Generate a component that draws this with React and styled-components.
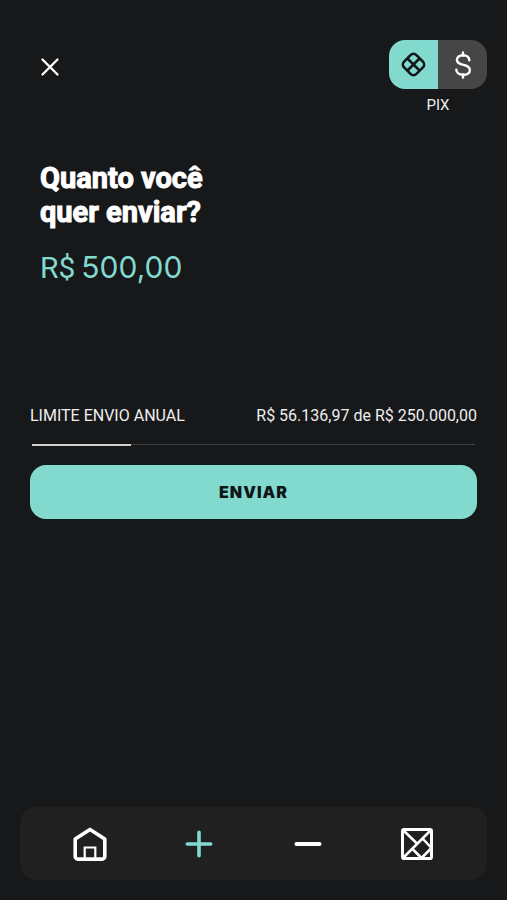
import React, { useState } from 'react';
import styled, { createGlobalStyle } from 'styled-components';

const GlobalStyle = createGlobalStyle`
    * {
        box-sizing: border-box;
    }
    body {
        margin: 0;
        background: #17181a;
        color: #fff;
        font-family: Roboto, "Liberation Sans", sans-serif;
    }
    button, input {
        font-family: inherit;
        color: inherit;
    }
`

const Screen = styled.div`
    display: flex;
    flex-direction: column;
    min-height: 100vh;
    padding: 40px 20px 20px;
`

const Header = styled.header`
    display: flex;
    justify-content: space-between;
    align-items: flex-start;
`

const IconButton = styled.button`
    display: flex;
    padding: 8px;
    margin: 9px 12px;
    border: 0;
    background: none;
    cursor: pointer;
`

const Method = styled.div`
    display: flex;
    flex-direction: column;
    align-items: center;
    gap: 6px;
`

const Switch = styled.div`
    display: flex;
    border-radius: 16px;
    overflow: hidden;
`

const SwitchButton = styled.button`
    display: flex;
    align-items: center;
    justify-content: center;
    width: 49px;
    height: 49px;
    padding: 0;
    border: 0;
    cursor: pointer;
    background: ${({ $active }) => ($active ? '#82dacf' : '#464646')};
    color: ${({ $active }) => ($active ? '#101719' : '#fff')};
`

const MethodName = styled.span`
    font-size: 15px;
    line-height: 20px;
    color: #eee;
`

const Amount = styled.div`
    display: flex;
    flex-direction: column;
    gap: 20px;
    margin-top: 46px;
    padding: 0 20px;
`

const Title = styled.label`
    max-width: 200px;
    font-size: 29px;
    font-weight: 700;
    line-height: 34px;
    -webkit-text-stroke: 1px currentColor;
`

const AmountRow = styled.div`
    display: flex;
    align-items: baseline;
    gap: 6px;
    height: 36px;
    font-size: 30px;
    line-height: 36px;
    color: #82dacf;
`

const AmountInput = styled.input`
    flex: 1;
    min-width: 0;
    height: 36px;
    padding: 0;
    border: 0;
    outline: none;
    background: none;
    font-family: Inter, sans-serif;
    font-size: 30px;
`

const Limit = styled.section`
    margin-top: 121px;
    padding: 0 10px;
`

const LimitRow = styled.div`
    display: flex;
    justify-content: space-between;
    font-size: 16px;
    line-height: 20px;
    color: #eee;
`

const Track = styled.div`
    display: flex;
    align-items: center;
    height: 2px;
    margin: 18px 2px 19px;
    background: linear-gradient(#404142, #404142) top / 100% 1px no-repeat;
`

const Fill = styled.div`
    height: 2px;
    background: #d0d0d0;
`

const SendButton = styled.button`
    width: 100%;
    height: 54px;
    border: 0;
    border-radius: 16px;
    background: #82dacf;
    color: #101719;
    font-family: Inter, sans-serif;
    font-size: 16px;
    font-weight: 900;
    letter-spacing: 1px;
    cursor: pointer;
`

const Nav = styled.nav`
    display: flex;
    margin-top: auto;
    padding: 0 16px;
    border-radius: 16px;
    background: #202020;
`

const NavLink = styled.a`
    display: flex;
    flex: 1;
    align-items: center;
    justify-content: center;
    height: 73px;
    color: ${({ $active }) => ($active ? '#82dacf' : '#fff')};
`

function CloseIcon(){
    return (
      <svg width="20" height="20" viewBox="0 0 20 20" fill="none" stroke="currentColor" strokeWidth="2.3" strokeLinecap="round">
        <path d="M2.5 2.5l15 15M17.5 2.5l-15 15" />
      </svg>
    )
}

function PixIcon(){
    return (
      <svg width="27" height="27" viewBox="0 0 26 26" fill="none" stroke="currentColor" strokeWidth="2.5" strokeLinejoin="round">
        <rect x="4.6" y="4.6" width="16.8" height="16.8" rx="4" transform="rotate(45 13 13)" />
        <path d="M7.2 7.2l11.6 11.6M18.8 7.2L7.2 18.8" />
      </svg>
    )
}

function DollarIcon(){
    return (
      <svg width="20" height="30" viewBox="0 0 20 30" fill="none" stroke="currentColor" strokeWidth="2.4" strokeLinecap="round">
        <path d="M10 2.5v3M10 24.5v3" />
        <path d="M16.3 10.2c0-3-2.4-5-6.2-5-3.7 0-6.2 1.9-6.2 4.8 0 6.6 13 3.2 13 9.9 0 2.9-2.6 4.9-6.8 4.9-4.1 0-6.8-2-6.8-5.2" />
      </svg>
    )
}

function HomeIcon(){
    return (
      <svg width="34" height="34" viewBox="0 0 34 34" fill="none" stroke="currentColor" strokeLinejoin="round">
        <path strokeWidth="3.6" d="M17 2.4L2.2 12v17.5a2.6 2.6 0 0 0 2.6 2.6h24.4a2.6 2.6 0 0 0 2.6-2.6V12z" />
        <path strokeWidth="2.2" strokeLinejoin="miter" d="M11.7 31V20.5h10.6V31" />
      </svg>
    )
}

function PlusIcon(){
    return (
      <svg width="28" height="28" viewBox="0 0 28 28" fill="none" stroke="currentColor" strokeWidth="3.6" strokeLinecap="round">
        <path d="M2.3 14h23.4M14 2.3v23.4" />
      </svg>
    )
}

function MinusIcon(){
    return (
      <svg width="28" height="28" viewBox="0 0 28 28" fill="none" stroke="currentColor" strokeWidth="3.8" strokeLinecap="round">
        <path d="M2.4 14h23.2" />
      </svg>
    )
}

function BoxIcon(){
    return (
      <svg width="32" height="32" viewBox="0 0 32 32" fill="none" stroke="currentColor" strokeWidth="2.5">
        <rect strokeWidth="3" x="1.5" y="1.5" width="29" height="29" rx="1.6" />
        <path d="M2.5 2.5L17 16.5M29.5 2.5l-27 27M22 11l8.5 9M11.5 21l9 9M30 20.5l-9.5 9.5" />
      </svg>
    )
}

const used = 56136.97;
const total = 250000;

function App(){
    const [method, setMethod] = useState('PIX');
    const [amount, setAmount] = useState('500,00');

    return (
      <Screen>
        <GlobalStyle />
        <Header>
          <IconButton type="button" aria-label="Fechar"><CloseIcon /></IconButton>
          <Method>
            <Switch>
              <SwitchButton type="button" aria-label="PIX" aria-pressed={method === 'PIX'} $active={method === 'PIX'} onClick={() => setMethod('PIX')}>
                <PixIcon />
              </SwitchButton>
              <SwitchButton type="button" aria-label="Dólar" aria-pressed={method === 'USD'} $active={method === 'USD'} onClick={() => setMethod('USD')}>
                <DollarIcon />
              </SwitchButton>
            </Switch>
            <MethodName>{method}</MethodName>
          </Method>
        </Header>
        <Amount>
          <Title htmlFor="amount">Quanto você quer enviar?</Title>
          <AmountRow>
            <span>R$</span>
            <AmountInput id="amount" type="text" inputMode="decimal" value={amount} onChange={e => setAmount(e.target.value)} />
          </AmountRow>
        </Amount>
        <Limit>
          <LimitRow>
            <span id="limit">LIMITE ENVIO ANUAL</span>
            <span>R$ 56.136,97 de R$ 250.000,00</span>
          </LimitRow>
          <Track role="progressbar" aria-labelledby="limit" aria-valuemin={0} aria-valuemax={total} aria-valuenow={used}>
            <Fill style={{ width: `${(used / total) * 100}%` }} />
          </Track>
          <SendButton type="button">ENVIAR</SendButton>
        </Limit>
        <Nav>
          <NavLink href="#home" aria-label="Início"><HomeIcon /></NavLink>
          <NavLink href="#add" aria-label="Adicionar" $active><PlusIcon /></NavLink>
          <NavLink href="#send" aria-label="Enviar"><MinusIcon /></NavLink>
          <NavLink href="#wallet" aria-label="Carteira"><BoxIcon /></NavLink>
        </Nav>
      </Screen>
    )
}

export default App;
